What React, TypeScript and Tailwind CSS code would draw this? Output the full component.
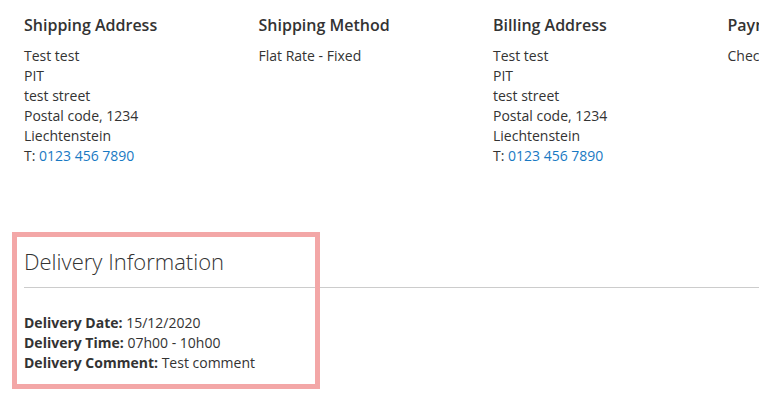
import React from "react";

interface AddressProps {
  title: string;
  lines?: string[];
  phone?: string;
}

function InfoBox({ title, lines = [], phone }: AddressProps) {
  return (
    <div className="w-[234.5px] shrink-0">
      <h3 className="text-[16px] leading-[20px] font-semibold mb-[11px]">{title}</h3>
      <div className="text-[14px] leading-[20px]">
        {lines.map((l) => (
          <div key={l}>{l}</div>
        ))}
        {phone && (
          <div>
            T: <a className="text-[#1979c3]">{phone}</a>
          </div>
        )}
      </div>
    </div>
  );
}

export default function App() {
  const address = ["Test test", "PIT", "test street", "Postal code, 1234", "Liechtenstein"];

  return (
    <div
      className="relative w-[759px] h-[419px] overflow-hidden bg-white text-[#333333]"
      style={{ fontFamily: '"Open Sans", "Liberation Sans", sans-serif' }}
    >
      <div className="w-[938px] ml-[24px] pt-[15px]">
        <div className="flex">
          <InfoBox title="Shipping Address" lines={address} phone="0123 456 7890" />
          <InfoBox title="Shipping Method" lines={["Flat Rate - Fixed"]} />
          <InfoBox title="Billing Address" lines={address} phone="0123 456 7890" />
          <InfoBox title="Payment Method" lines={["Check / Money order"]} />
        </div>

        <div className="mt-[82px] border-b border-[#cccccc] pb-[13px]">
          <h2 className="text-[22px] leading-[26px] font-light">Delivery Information</h2>
        </div>
        <div className="mt-[25px] text-[14px] leading-[20px]">
          <div>
            <span className="font-bold">Delivery Date:</span> 15/12/2020
          </div>
          <div>
            <span className="font-bold">Delivery Time:</span> 07h00 - 10h00
          </div>
          <div>
            <span className="font-bold">Delivery Comment:</span> Test comment
          </div>
        </div>
      </div>

      {/* highlight annotation */}
      <div className="absolute left-[12px] top-[232px] w-[308px] h-[157px] border-[5px] border-[#f3a7a7] pointer-events-none" />
    </div>
  );
}
